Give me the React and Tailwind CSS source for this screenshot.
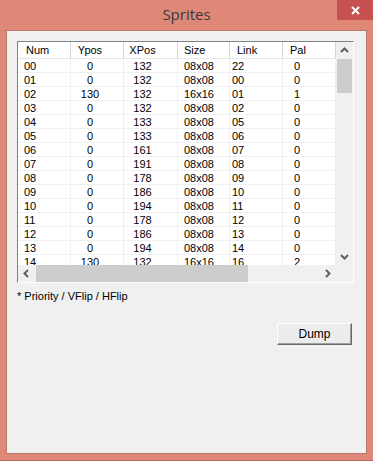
import React from "react";

const rows = [
  ["00", "0", "132", "08x08", "22", "0"],
  ["01", "0", "132", "08x08", "00", "0"],
  ["02", "130", "132", "16x16", "01", "1"],
  ["03", "0", "132", "08x08", "02", "0"],
  ["04", "0", "133", "08x08", "05", "0"],
  ["05", "0", "133", "08x08", "06", "0"],
  ["06", "0", "161", "08x08", "07", "0"],
  ["07", "0", "191", "08x08", "08", "0"],
  ["08", "0", "178", "08x08", "09", "0"],
  ["09", "0", "186", "08x08", "10", "0"],
  ["10", "0", "194", "08x08", "11", "0"],
  ["11", "0", "178", "08x08", "12", "0"],
  ["12", "0", "186", "08x08", "13", "0"],
  ["13", "0", "194", "08x08", "14", "0"],
  ["14", "130", "132", "16x16", "16", "2"],
];

// width, header padding, cell padding/alignment
const cols = [
  { name: "Num", w: "w-[53px]", head: "pl-[8px]", cell: "pl-[6px]" },
  { name: "Ypos", w: "w-[53px]", head: "text-center pr-[14px]", cell: "text-center pr-[14px]" },
  { name: "XPos", w: "w-[54px]", head: "text-center pr-[16px]", cell: "text-center pr-[16px]" },
  { name: "Size", w: "w-[52px]", head: "pl-[6px]", cell: "pl-[6px]" },
  { name: "Link", w: "w-[53px]", head: "pl-[7px]", cell: "pl-[2px]" },
  { name: "Pal", w: "w-[53px]", head: "pl-[7px]", cell: "pl-[11px]" },
];

const Chevron = ({ dir }) => {
  const pts = {
    up: "1,6 4.5,2.5 8,6",
    down: "1,3 4.5,6.5 8,3",
    left: "6,1 2.5,4.5 6,8",
    right: "3,1 6.5,4.5 3,8",
  }[dir];
  return (
    <svg width="9" height="9" viewBox="0 0 9 9">
      <polyline points={pts} fill="none" stroke="#606060" strokeWidth="2" />
    </svg>
  );
};

const App = () => {
  return (
    <div
      className="w-[373px] h-[461px] bg-[#e08878] flex flex-col border-b border-[#b86a5c]"
      style={{ fontFamily: '"Liberation Sans", Arial, sans-serif' }}
    >
      {/* Title bar */}
      <div className="relative h-[30px] flex items-center justify-center">
        <span
          className="text-[15px] text-[#3a3a3a] -mt-[1px]"
          style={{ fontFamily: '"Open Sans", "Noto Sans", sans-serif' }}
        >
          Sprites
        </span>
        <div className="absolute top-0 right-0 w-[36px] h-[20px] bg-[#c75050] flex items-center justify-center">
          <svg width="9" height="9" viewBox="0 0 9 9">
            <path d="M1 1 L8 8 M8 1 L1 8" stroke="#fff" strokeWidth="2" />
          </svg>
        </div>
      </div>

      {/* Client area */}
      <div className="ml-[6px] mr-[6px] h-[424px] border border-[#b97a6e] bg-[#f0f0f0] text-[11px] text-black">
        <div className="pl-[10px] pt-[10px]">
          {/* List view */}
          <div className="w-[337px] h-[242px] border border-t-[#828282] border-l-[#828282] border-r-[#ffffff] border-b-[#ffffff] flex">
            <div className="w-[318px] flex flex-col">
              <div className="h-[223px] bg-white overflow-hidden">
                <div className="flex h-[17px] border-b border-[#e5e5e5]">
                  {cols.map((c) => (
                    <div
                      key={c.name}
                      className={`${c.w} shrink-0 border-r border-[#d5d5d5] leading-[17px] ${c.head}`}
                    >
                      {c.name}
                    </div>
                  ))}
                </div>
                {rows.map((r, i) => (
                  <div key={i} className="flex h-[14px] border-b border-[#f0f0f0]">
                    {r.map((v, j) => (
                      <div
                        key={j}
                        className={`${cols[j].w} shrink-0 border-r border-[#f0f0f0] leading-[14px] ${cols[j].cell}`}
                      >
                        {v}
                      </div>
                    ))}
                  </div>
                ))}
              </div>
              {/* Horizontal scrollbar */}
              <div className="h-[17px] bg-[#f0f0f0] flex items-center">
                <div className="w-[17px] h-[17px] flex items-center justify-center">
                  <Chevron dir="left" />
                </div>
                <div className="flex-1 h-[17px] flex">
                  <div className="w-[212px] h-[17px] ml-[1px] bg-[#cdcdcd]" />
                </div>
                <div className="w-[17px] h-[17px] flex items-center justify-center">
                  <Chevron dir="right" />
                </div>
              </div>
            </div>
            {/* Vertical scrollbar */}
            <div className="w-[17px] flex flex-col bg-[#f0f0f0]">
              <div className="h-[223px] flex flex-col">
                <div className="h-[17px] flex items-center justify-center">
                  <Chevron dir="up" />
                </div>
                <div className="flex-1">
                  <div className="h-[34px] mx-[1px] bg-[#cdcdcd]" />
                </div>
                <div className="h-[17px] flex items-center justify-center">
                  <Chevron dir="down" />
                </div>
              </div>
              <div className="h-[17px]" />
            </div>
          </div>

          <div className="mt-[7px] leading-[13px]">* Priority / VFlip / HFlip</div>
        </div>

        <div className="flex justify-end pr-[14px] mt-[20px]">
          <button className="w-[75px] h-[22px] bg-[#ececec] border border-t-white border-l-white border-r-[#696969] border-b-[#696969] shadow-[inset_-1px_-1px_0_#a0a0a0] text-[12px] leading-[18px]">
            Dump
          </button>
        </div>
      </div>
    </div>
  );
};

export default App;
